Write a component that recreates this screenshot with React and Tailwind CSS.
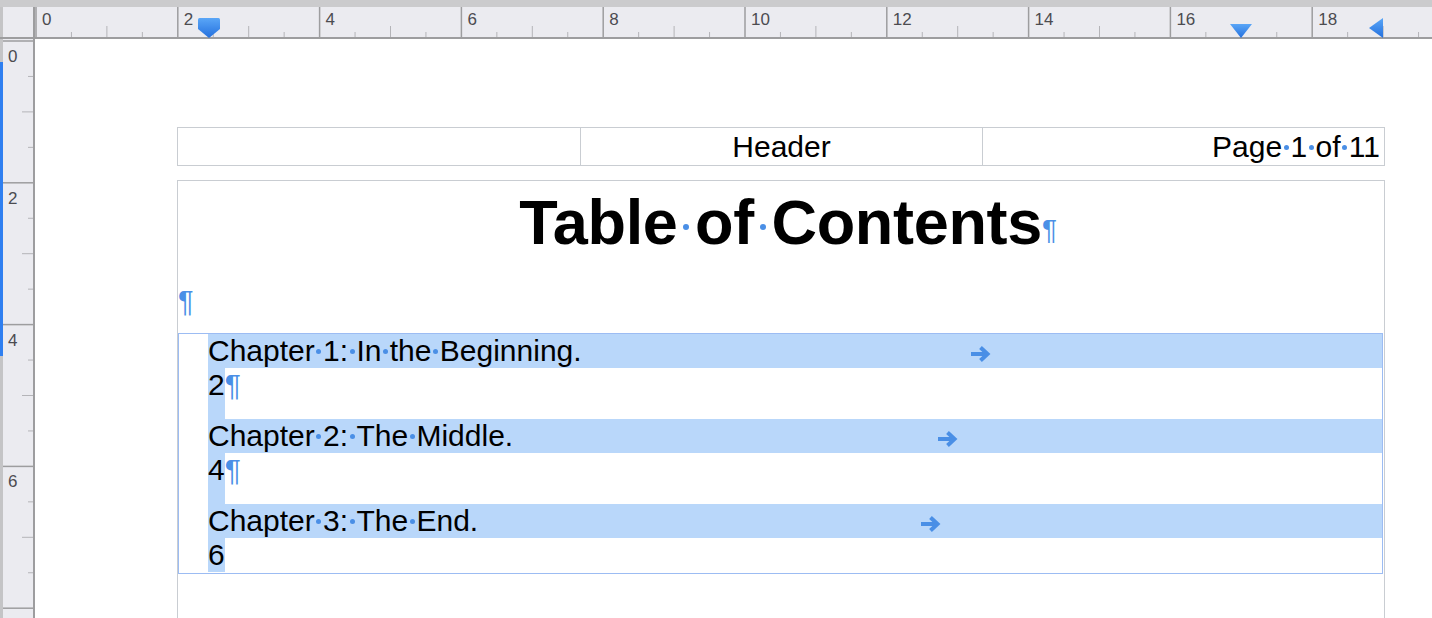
import React from 'react';

const UNIT = 70.9;
const BLUE = '#4a8fe6';

// visible space marker, as shown with invisibles turned on
const Dot = ({ big }) => (
  <span className="inline-block w-[0.278em] text-center align-baseline">
    <span
      className={`inline-block rounded-full bg-[#4a8fe6] ${big ? 'w-[6px] h-[6px] mb-[0.22em]' : 'w-[5px] h-[5px] mb-[0.24em]'}`}
    />
  </span>
);

const Spaced = ({ text, big }) => {
  const parts = text.split(' ');
  return (
    <>
      {parts.map((p, i) => (
        <React.Fragment key={i}>
          {i > 0 && <Dot big={big} />}
          {p}
        </React.Fragment>
      ))}
    </>
  );
};

const TabArrow = () => (
  <svg width="21" height="18" viewBox="0 0 21 18" className="mt-[11px]">
    <path d="M1 9h16" stroke={BLUE} strokeWidth="4" />
    <path d="M10.5 2.5l7 6.5-7 6.5" stroke={BLUE} strokeWidth="4" fill="none" strokeLinejoin="miter" />
  </svg>
);

const HorizontalRuler = () => {
  const ticks = [];
  for (let h = 0; h <= 39; h++) {
    const u = h / 2;
    const x = 36 + u * UNIT;
    if (x > 1432) break;
    if (h % 4 === 0) ticks.push(<line key={h} x1={x} x2={x} y1="0" y2="30" stroke="#9d9d9f" strokeWidth="1.5" />);
    else if (h % 2 === 0) ticks.push(<line key={h} x1={x} x2={x} y1="19" y2="30" stroke="#b4b4b8" strokeWidth="1" />);
    else ticks.push(<line key={h} x1={x} x2={x} y1="25" y2="30" stroke="#b4b4b8" strokeWidth="1" />);
  }
  const labels = [0, 2, 4, 6, 8, 10, 12, 14, 16, 18];
  return (
    <div className="relative h-[32px] bg-[#ebebf0] border-b-2 border-[#9d9d9f]">
      <div className="w-[35px] h-full border-r-2 border-l-[3px] border-l-[#c4c4c6] border-r-[#9d9d9f]" />
      <svg className="absolute inset-0" width="1432" height="32">
        {ticks}
        <defs>
          <linearGradient id="mk" x1="0" y1="0" x2="0" y2="1">
            <stop offset="0" stopColor="#5aa6f7" />
            <stop offset="1" stopColor="#2470de" />
          </linearGradient>
        </defs>
        <path d="M199.5 11 H218.5 Q220 11 220 12.5 V22 L209 31 L198 22 V12.5 Q198 11 199.5 11 Z" fill="url(#mk)" />
        <path d="M1230 17 H1252 L1241 31 Z" fill="url(#mk)" />
        <path d="M1369 21 L1383 11 V31 Z" fill="url(#mk)" />
      </svg>
      {labels.map((l) => (
        <span
          key={l}
          className="absolute top-[4px] text-[17px] leading-[18px] text-[#4c4c50]"
          style={{ left: 36 + l * UNIT + 6 }}
        >
          {l}
        </span>
      ))}
    </div>
  );
};

const VerticalRuler = () => {
  const ticks = [];
  for (let h = 0; h <= 17; h++) {
    const y = 2 + (h / 2) * UNIT;
    if (h % 4 === 0) ticks.push(<line key={h} y1={y} y2={y} x1="3" x2="33" stroke="#9d9d9f" strokeWidth="1.5" />);
    else if (h % 2 === 0) ticks.push(<line key={h} y1={y} y2={y} x1="22" x2="33" stroke="#b4b4b8" strokeWidth="1" />);
    else ticks.push(<line key={h} y1={y} y2={y} x1="28" x2="33" stroke="#b4b4b8" strokeWidth="1" />);
  }
  return (
    <div className="relative w-[35px] h-full bg-[#ebebf0] border-r-2 border-[#9d9d9f] border-l-[3px] border-l-[#c4c4c6]">
      <div className="absolute -left-[3px] top-[23px] w-[3px] h-[294px] bg-[#2f7ff0]" />
      <svg className="absolute -left-[3px] top-0" width="35" height="579">
        {ticks}
      </svg>
      {[0, 2, 4, 6].map((l) => (
        <span
          key={l}
          className="absolute left-[5px] text-[17px] leading-[18px] text-[#4c4c50]"
          style={{ top: 2 + l * UNIT + 7 }}
        >
          {l}
        </span>
      ))}
    </div>
  );
};

const entries = [
  { title: 'Chapter 1: In the Beginning.', page: '2', w: 'w-[783px]' },
  { title: 'Chapter 2: The Middle.', page: '4', w: 'w-[750px]' },
  { title: 'Chapter 3: The End.', page: '6', w: 'w-[733px]' },
];

export default function App() {
  return (
    <div
      className="w-[1432px] h-[618px] overflow-hidden bg-white flex flex-col text-black"
      style={{ fontFamily: '"Liberation Sans", Arial, sans-serif' }}
    >
      <div className="h-[7px] bg-[#cbcbcd]" />
      <HorizontalRuler />
      <div className="flex flex-1 min-h-0">
        <VerticalRuler />
        <div className="flex-1 bg-white pl-[142px] pt-[88px] pr-[47px]">
          {/* header table */}
          <div className="flex h-[39px] border border-[#c9cdd2] text-[30px] leading-[37px]">
            <div className="w-[403px] border-r border-[#c9cdd2]" />
            <div className="w-[402px] border-r border-[#c9cdd2] text-center">Header</div>
            <div className="flex-1 text-right pr-[4px]">
              <Spaced text="Page 1 of 11" />
            </div>
          </div>

          {/* body */}
          <div className="mt-[14px] border border-b-0 border-[#c9cdd2] h-[500px]">
            <div className="pt-[5px] pl-[14px] text-center text-[63px] leading-[72px] font-bold tracking-[-0.3px]">
              <Spaced text="Table of Contents" big />
              <span className="text-[#4a8fe6] text-[28px] leading-none font-normal align-[5px]">¶</span>
            </div>
            <div className="mt-[26px] text-[29px] leading-[34px] text-[#4a8fe6]">¶</div>

            <div className="mt-[15px] mr-[1px] border border-[#9cbcf3] pl-[29px] pb-[1px] text-[30px] leading-[34px]">
              {entries.map((e, i) => (
                <div key={i}>
                  <div className="h-[34px] bg-[#b9d7fa]">
                    <div className={`flex ${e.w}`}>
                      <span>
                        <Spaced text={e.title} />
                      </span>
                      <span className="ml-auto">
                        <TabArrow />
                      </span>
                    </div>
                  </div>
                  <div className={`flex ${i < 2 ? 'h-[51px]' : 'h-[34px]'}`}>
                    <span className="bg-[#b9d7fa] h-full">{e.page}</span>
                    {i < 2 && <span className="text-[#4a8fe6]">¶</span>}
                  </div>
                </div>
              ))}
            </div>
          </div>
        </div>
      </div>
    </div>
  );
}
